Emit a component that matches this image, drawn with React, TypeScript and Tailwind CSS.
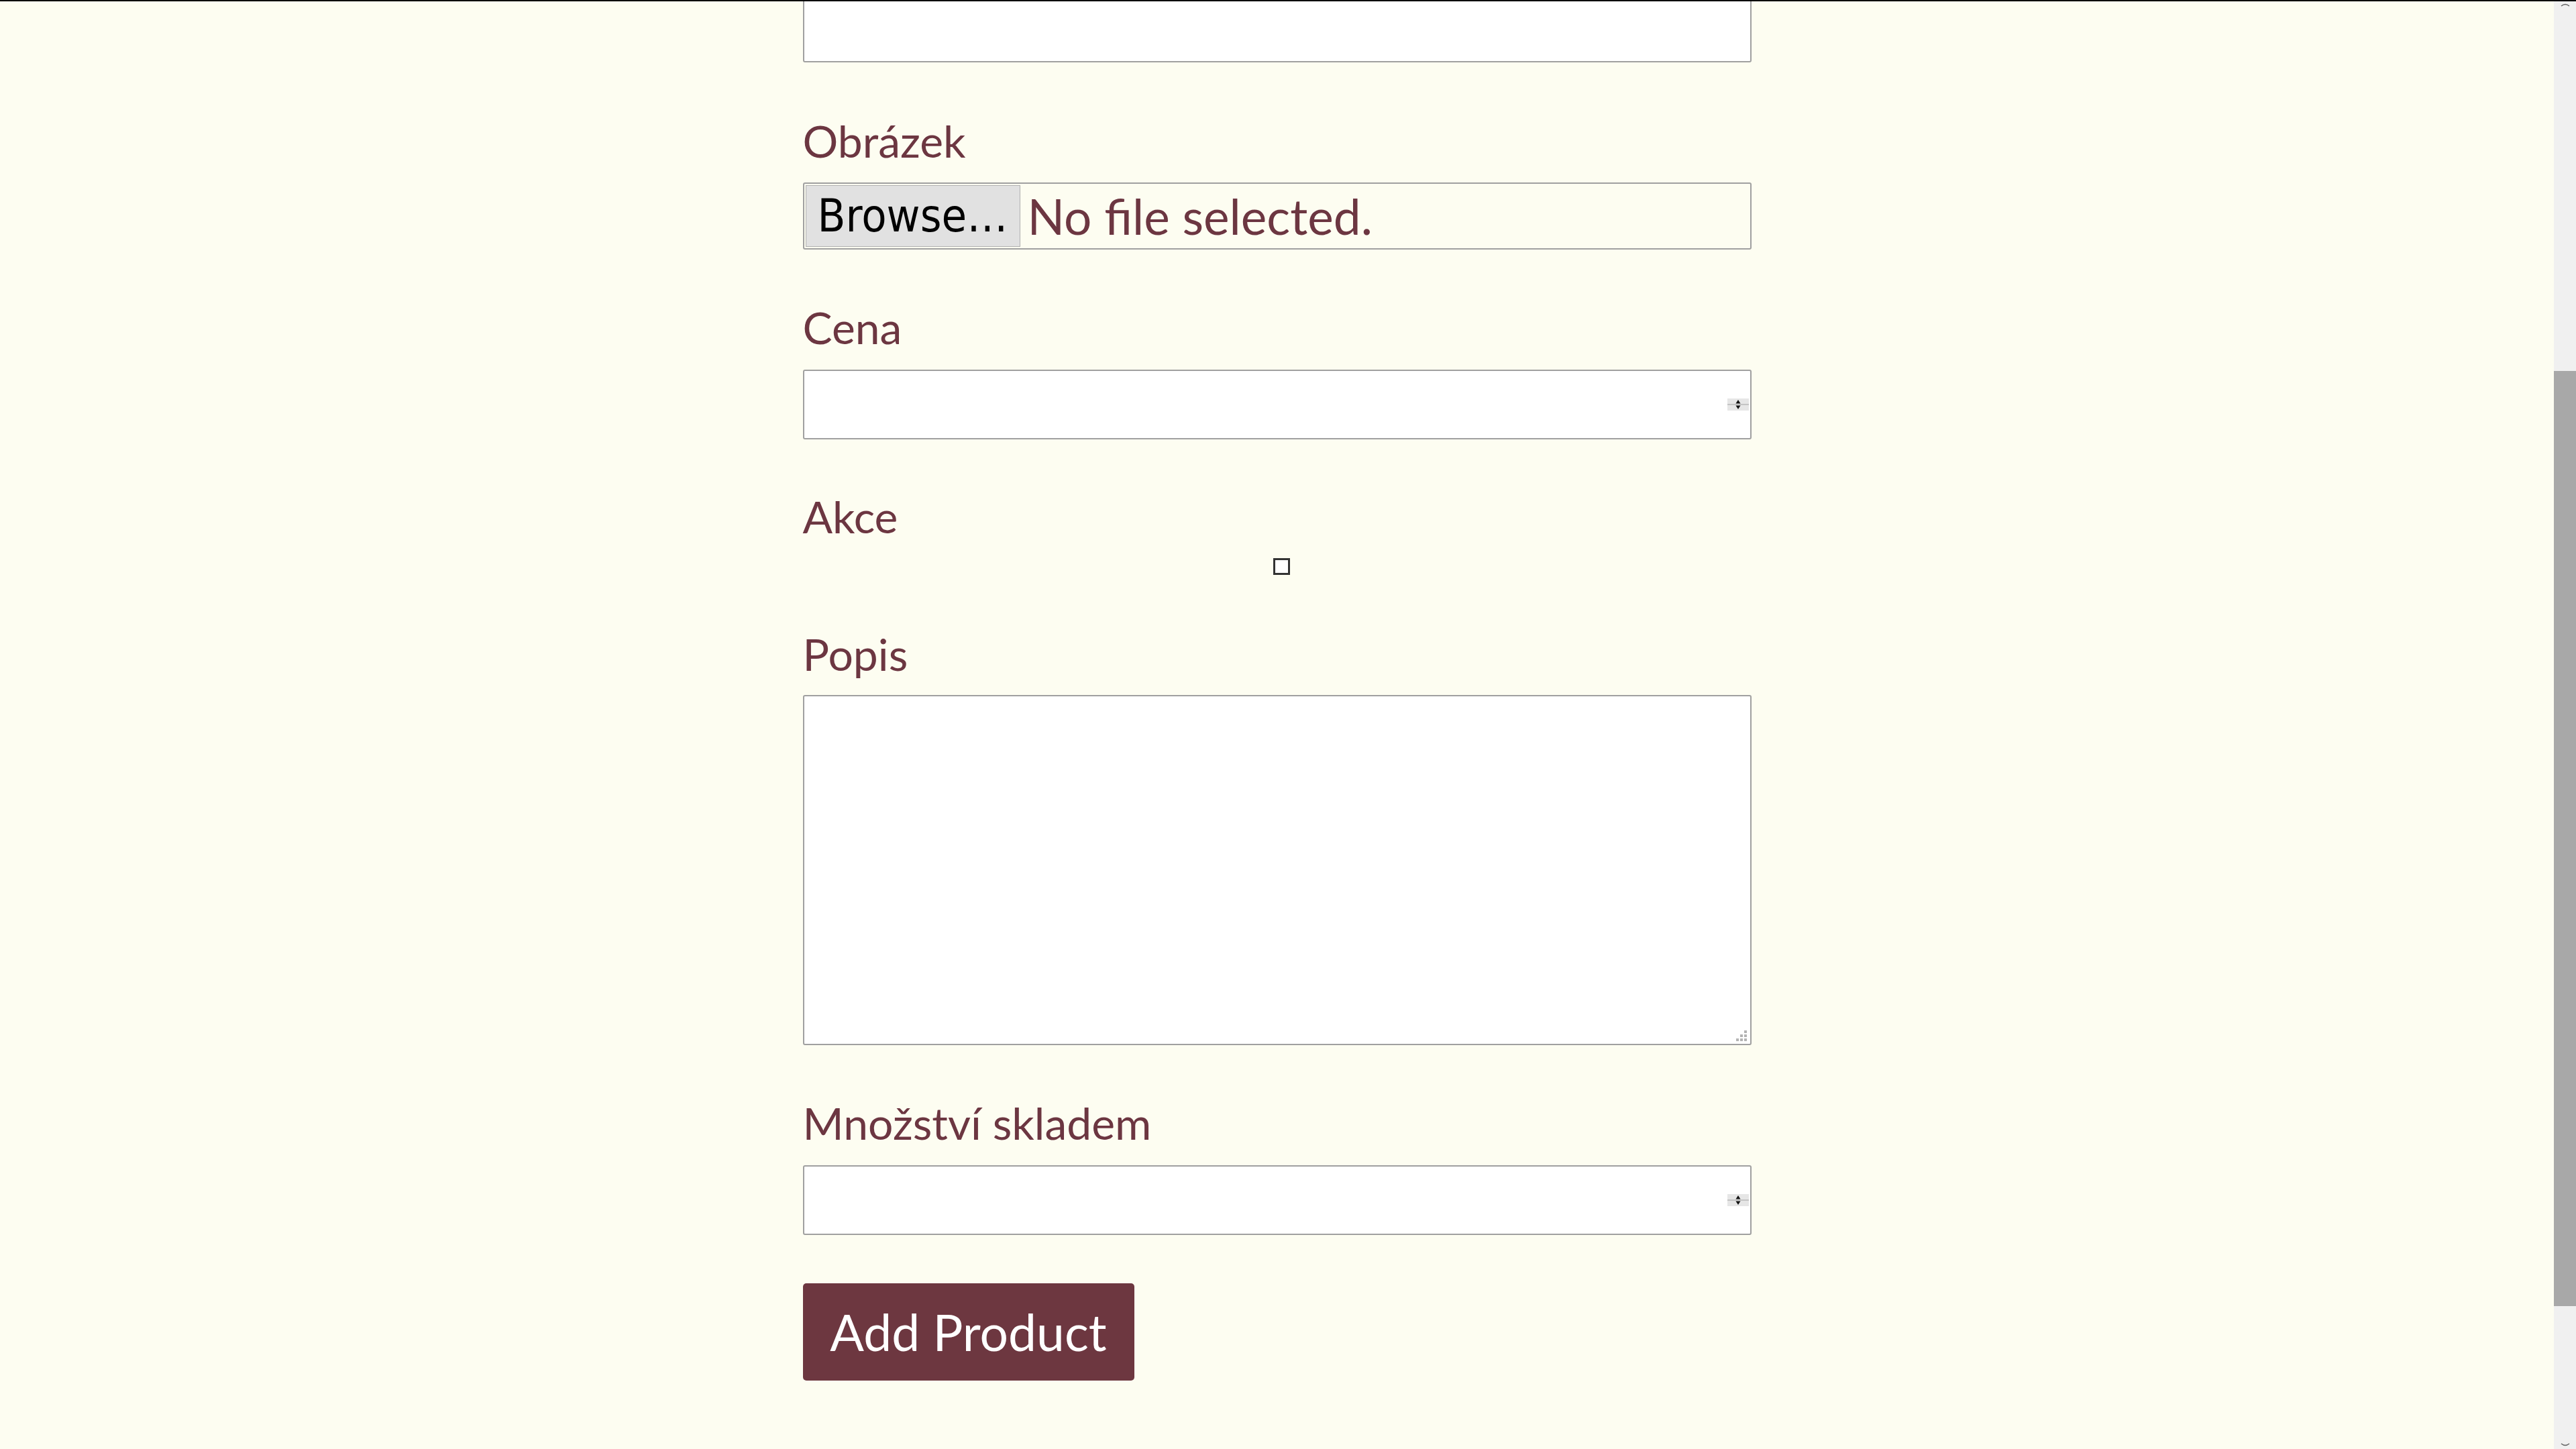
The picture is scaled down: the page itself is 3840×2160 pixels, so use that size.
import React from 'react';

const font = { fontFamily: 'Lato, "Open Sans", sans-serif' };

function Spinner() {
  return (
    <svg className="absolute right-[4px] top-1/2 -translate-y-1/2" width="32" height="18" viewBox="0 0 32 18">
      <rect x="0" y="0" width="32" height="18" fill="#e6e6e6" />
      <rect x="0" y="8" width="32" height="2" fill="#c4c4c4" />
      <path d="M16 2 L19.5 7.5 L12.5 7.5 Z" fill="#111" />
      <path d="M16 16 L19.5 10.5 L12.5 10.5 Z" fill="#111" />
    </svg>
  );
}

function Grip() {
  return (
    <svg className="absolute right-[7px] bottom-[6px]" width="16" height="16" viewBox="0 0 16 16">
      <rect x="12" y="0" width="4" height="4" fill="#b4b4b4" />
      <rect x="6" y="6" width="4" height="4" fill="#b4b4b4" />
      <rect x="12" y="6" width="4" height="4" fill="#b4b4b4" />
      <rect x="0" y="12" width="4" height="4" fill="#b4b4b4" />
      <rect x="6" y="12" width="4" height="4" fill="#b4b4b4" />
      <rect x="12" y="12" width="4" height="4" fill="#b4b4b4" />
    </svg>
  );
}

function NumberField() {
  return (
    <div className="relative">
      <input
        type="text"
        className="block w-full h-[104px] bg-white border-2 border-[#a0a0a0] rounded-[3px] outline-none"
      />
      <Spinner />
    </div>
  );
}

export default function App() {
  const labelCls = 'block text-[66px] leading-[79px] text-[#6c3641]';

  return (
    <div className="w-full h-[2160px] flex flex-col overflow-hidden bg-[#fdfdf1]">
      <div className="h-[2px] bg-black shrink-0" />
      <div className="flex flex-1 min-h-0">
        <main className="flex-1 overflow-hidden" style={font}>
          <form className="w-[1414px] mx-auto flex flex-col">
            <input
              type="text"
              className="block w-full h-[104px] mt-[-13px] bg-white border-2 border-[#a0a0a0] rounded-[3px] outline-none"
            />

            <label className={labelCls + ' mt-[77px] mb-[23px]'}>Obrázek</label>
            <div className="flex items-center h-[100px] border-2 border-[#a0a0a0] rounded-[3px] p-[2px]">
              <button
                type="button"
                className="h-full w-[320px] bg-[#e1e1e1] border border-[#b0b0b0] text-black text-[68px] leading-none"
                style={{ fontFamily: '"DejaVu Sans Condensed", "Liberation Sans Narrow", Roboto, sans-serif', fontStretch: 'condensed' }}
              >
                Browse…
              </button>
              <span className="ml-[11px] text-[73px] leading-none text-[#6c3641]">No file selected.</span>
            </div>

            <label className={labelCls + ' mt-[76px] mb-[24px]'}>Cena</label>
            <NumberField />

            <label className={labelCls + ' mt-[75px] mb-[23px]'}>Akce</label>
            <div className="flex justify-center pl-[14px]">
              <span className="block w-[25px] h-[25px] border-[3px] border-[#333] bg-white" />
            </div>

            <label className={labelCls + ' mt-[78px] mb-[22px]'}>Popis</label>
            <div className="relative">
              <textarea className="block w-full h-[522px] bg-white border-2 border-[#a0a0a0] rounded-[3px] resize-none outline-none" />
              <Grip />
            </div>

            <label className={labelCls + ' mt-[76px] mb-[24px]'}>Množství skladem</label>
            <NumberField />

            <div className="mt-[72px]">
              <button
                type="submit"
                className="w-[494px] h-[145px] bg-[#6d3740] text-white rounded-[5px] text-[75px] leading-none"
              >
                Add Product
              </button>
            </div>
          </form>
        </main>

        <div className="w-[33px] shrink-0 bg-[#f0f0f0] flex flex-col relative">
          <svg className="absolute top-[2px] left-[10px]" width="14" height="6" viewBox="0 0 14 6">
            <path d="M1 5 Q7 0 13 5" stroke="#606060" strokeWidth="1.5" fill="none" />
          </svg>
          <div className="h-[551px] shrink-0" />
          <div className="h-[1394px] bg-[#a8a8a8]" />
          <svg className="absolute bottom-[3px] left-[10px]" width="14" height="6" viewBox="0 0 14 6">
            <path d="M1 1 Q7 6 13 1" stroke="#606060" strokeWidth="1.5" fill="none" />
          </svg>
        </div>
      </div>
    </div>
  );
}
